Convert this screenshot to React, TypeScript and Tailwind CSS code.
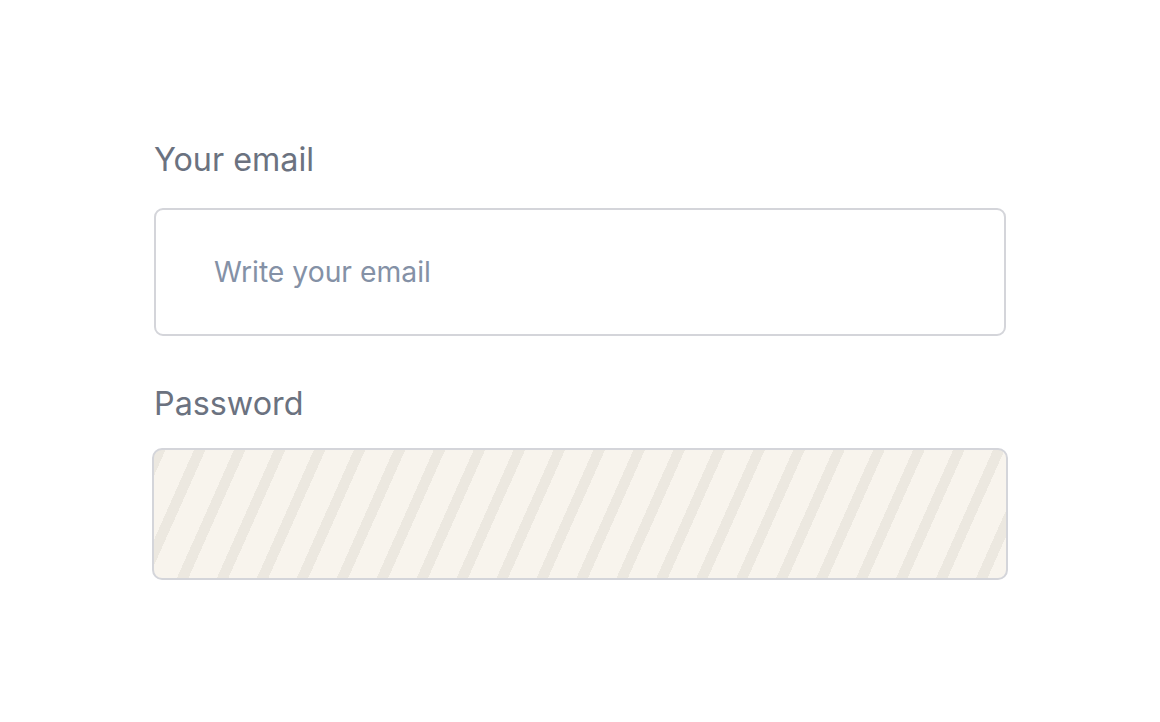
import React from "react";

export default function App() {
  return (
    <div className="min-h-[722px] w-[1160px] bg-white font-['Inter',sans-serif]">
      <div className="pl-[154px] pt-[144px] w-[1006px]">
        <label className="block text-[32.3px] leading-[32px] text-[#6b7280]">Your email</label>
        <div className="mt-[32px] h-[128px] w-[852px] rounded-[9px] border-2 border-[#d4d5da] bg-white flex items-center pl-[58px]">
          <input
            type="email"
            placeholder="Write your email"
            className="w-full bg-transparent outline-none text-[28.3px] leading-[32px] text-[#374151] placeholder:text-[#8491a6]"
          />
        </div>
        <label className="mt-[52px] block text-[32.3px] leading-[32px] text-[#6b7280]">Password</label>
        <div className="mt-[28px] -ml-[2px] h-[132px] w-[856px] rounded-[10px] border-2 border-[#d4d5da] bg-[#f8f4ed] bg-[repeating-linear-gradient(114deg,#ece8e0_0px,#ece8e0_10.5px,#f8f4ed_10.5px,#f8f4ed_36.5px)]" />
      </div>
    </div>
  );
}
